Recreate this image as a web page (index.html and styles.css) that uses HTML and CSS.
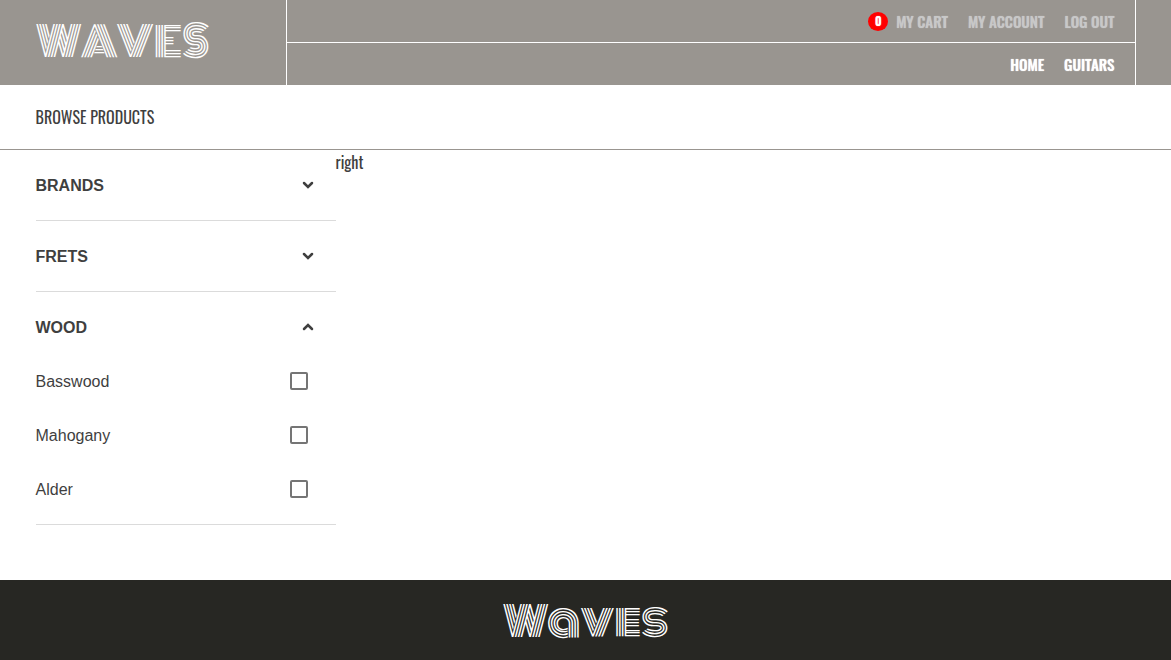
FILE: index.html
```
<!DOCTYPE html>
<html lang="en">
<head>
<meta charset="utf-8">
<meta name="viewport" content="width=device-width, initial-scale=1">
<title>Waves</title>
<link rel="stylesheet" href="styles.css">
</head>
<body>
<header class="header">
  <div class="container header-row">
    <a class="brand" href="#">WAVES</a>
    <div class="navs">
      <nav class="nav nav-user" aria-label="Account">
        <a class="cart" href="#"><span class="count">0</span>MY CART</a>
        <a href="#">MY ACCOUNT</a>
        <a href="#">LOG OUT</a>
      </nav>
      <nav class="nav nav-main" aria-label="Main">
        <a href="#">HOME</a>
        <a href="#">GUITARS</a>
      </nav>
    </div>
  </div>
</header>
<div class="page-top">
  <div class="container">BROWSE PRODUCTS</div>
</div>
<main class="container shop">
  <aside class="filters">
    <section class="filter">
      <button class="filter-head" type="button" aria-expanded="false">BRANDS
        <svg class="chevron" width="12" height="12" viewBox="0 0 24 24" aria-hidden="true"><path d="M4 8l8 8 8-8"/></svg>
      </button>
    </section>
    <section class="filter">
      <button class="filter-head" type="button" aria-expanded="false">FRETS
        <svg class="chevron" width="12" height="12" viewBox="0 0 24 24" aria-hidden="true"><path d="M4 8l8 8 8-8"/></svg>
      </button>
    </section>
    <section class="filter">
      <button class="filter-head" type="button" aria-expanded="true">WOOD
        <svg class="chevron" width="12" height="12" viewBox="0 0 24 24" aria-hidden="true"><path d="M4 16l8-8 8 8"/></svg>
      </button>
      <label class="option"><span>Basswood</span><input type="checkbox"></label>
      <label class="option"><span>Mahogany</span><input type="checkbox"></label>
      <label class="option"><span>Alder</span><input type="checkbox"></label>
    </section>
  </aside>
  <div class="results">right</div>
</main>
<footer class="footer">Waves</footer>
</body>
</html>
```
FILE: styles.css
```
* { box-sizing: border-box; }

body {
  margin: 0;
  min-height: 100vh;
  display: flex;
  flex-direction: column;
  background: #fff;
  color: #3f3f3f;
  font: 16px/24px Oswald, "Liberation Sans Narrow", sans-serif;
}

a { color: inherit; text-decoration: none; }

.container {
  width: 100%;
  max-width: 1100px;
  margin: 0 auto;
}

.header { background: #999590; }
.header-row { display: flex; }

.brand {
  width: 250px;
  color: #fff;
  font: 400 40px/85px Monoton, "Liberation Sans", sans-serif;
}

.navs {
  flex: 1;
  border: solid #fff;
  border-width: 0 1px;
}

.nav {
  display: flex;
  justify-content: flex-end;
  align-items: center;
  gap: 20px;
  height: 42px;
  padding: 0 20px;
  font-size: 15px;
  font-weight: 500;
  text-shadow: 0 0 1px currentColor;
  color: #fff;
}
.nav-user {
  height: 43px;
  border-bottom: 1px solid #fff;
  color: #c8c8c8;
}

.cart { display: flex; align-items: center; gap: 8px; }
.count {
  width: 20px;
  height: 19px;
  border-radius: 50%;
  background: #f00;
  color: #fff;
  font-size: 12px;
  font-weight: 600;
  line-height: 18px;
  text-align: center;
}

.page-top {
  padding: 20px 0;
  border-bottom: 1px solid #999590;
}

.shop {
  flex: 1;
  display: flex;
  padding-bottom: 55px;
}

.filters {
  width: 300px;
  font-family: "Liberation Sans", Arial, sans-serif;
}

.filter { border-bottom: 1px solid #dbdbdb; }

.filter-head {
  display: flex;
  align-items: center;
  justify-content: space-between;
  width: 100%;
  padding: 24px 22px 22px 0;
  border: 0;
  background: none;
  color: inherit;
  font: 700 16px/24px "Liberation Sans", Arial, sans-serif;
}

.chevron {
  margin-bottom: 2px;
  fill: none;
  stroke: currentColor;
  stroke-width: 5;
  stroke-linecap: round;
}

.option {
  display: flex;
  align-items: center;
  justify-content: space-between;
  height: 54px;
  padding-right: 28px;
}
.option span { padding-top: 2px; }
.filter-head + .option { margin-top: -8px; }
.option:last-child { margin-bottom: 8px; }

.option input {
  appearance: none;
  width: 18px;
  height: 18px;
  margin: 0;
  border: 2px solid #757575;
  border-radius: 2px;
}
.option input:checked { background: #757575; }

.footer {
  height: 80px;
  background: #272723;
  color: #fff;
  font: 400 40px/84px Monoton, "Liberation Sans", sans-serif;
  text-align: center;
}
```
